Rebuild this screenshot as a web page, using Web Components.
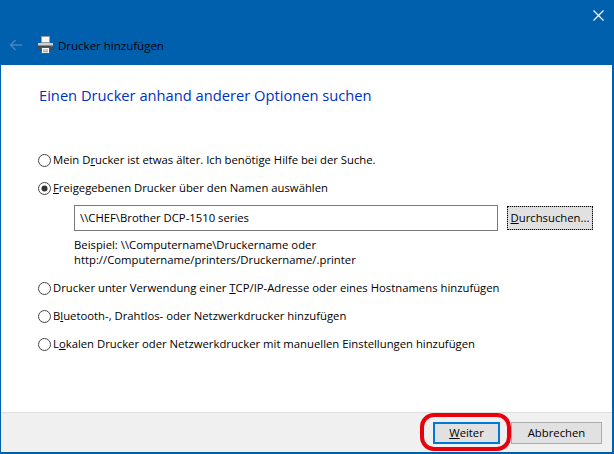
<!DOCTYPE html>
<html lang="de">
<head>
<meta charset="utf-8">
<title>Drucker hinzufügen</title>
<style>
html, body { margin: 0; padding: 0; }
body { font-family: "Open Sans", "Noto Sans", sans-serif; font-size: 11.3px; color: #000; }
u { text-decoration: underline; text-underline-offset: 1px; }
</style>
</head>
<body>
<wizard-window>
    <wizard-header slot="header" title="Drucker hinzufügen"></wizard-header>
    <wizard-title>Einen Drucker anhand anderer Optionen suchen</wizard-title>
    <radio-option style="margin-top:46px"><span>Mein D<u>r</u>ucker ist etwas älter. Ich benötige Hilfe bei der Suche.</span></radio-option>
    <radio-option checked style="margin-top:12px"><span><u>F</u>reigegebenen Drucker über den Namen auswählen</span></radio-option>
    <path-field value="\\CHEF\Brother DCP-1510 series"></path-field>
    <hint-text>Beispiel: \\Computername\Druckername oder<br>http://Computername/printers/Druckername/.printer</hint-text>
    <radio-option style="margin-top:13px"><span>Drucker unter Verwendung einer <u>T</u>CP/IP-Adresse oder eines Hostnamens hinzufügen</span></radio-option>
    <radio-option style="margin-top:12px"><span>B<u>l</u>uetooth-, Drahtlos- oder Netzwerkdrucker hinzufügen</span></radio-option>
    <radio-option style="margin-top:12px"><span>L<u>o</u>kalen Drucker oder Netzwerkdrucker mit manuellen Einstellungen hinzufügen</span></radio-option>
    <wizard-footer slot="footer"></wizard-footer>
</wizard-window>

<script>
// window frame: header on top, page in the middle, footer at the bottom
class WizardWindow extends HTMLElement {
    constructor() {
        super();
        this.attachShadow({ mode: 'open' });
        this.shadowRoot.innerHTML = `
        <style>
            :host {
                display: flex;
                flex-direction: column;
                box-sizing: border-box;
                width: 614px;
                height: 454px;
                background: #fff;
                border-left: 1px solid #0060ae;
                border-right: 2px solid #0060ae;
                border-bottom: 2px solid #0060ae;
            }
            .page {
                flex: 1;
                display: flex;
                flex-direction: column;
                padding: 0 0 0 37px;
                min-height: 0;
            }
        </style>
        <slot name="header"></slot>
        <div class="page"><slot></slot></div>
        <slot name="footer"></slot>
        `;
    }
}
customElements.define('wizard-window', WizardWindow);

class WizardHeader extends HTMLElement {
    constructor() {
        super();
        this.attachShadow({ mode: 'open' });
    }

    connectedCallback() {
        this.shadowRoot.innerHTML = `
        <style>
            :host {
                display: flex;
                flex-direction: column;
                height: 65px;
                margin: 0 -2px 0 -1px;
                background: #0060ae;
            }
            .close {
                display: flex;
                justify-content: flex-end;
                padding: 10px 10px 0 0;
                height: 11px;
            }
            .row {
                display: flex;
                align-items: center;
                margin-top: 14px;
                height: 20px;
                padding-left: 9px;
            }
            .back { margin-right: 15px; }
            .print { margin-right: 4px; }
            .title { font-size: 11.5px; color: #000; white-space: nowrap; }
        </style>
        <div class="close">
            <svg width="11" height="11" viewBox="0 0 11 11"><path d="M.5.5l10 10M10.5.5l-10 10" stroke="#fff" stroke-width="1.2" fill="none"/></svg>
        </div>
        <div class="row">
            <svg class="back" width="13" height="12" viewBox="0 0 13 12"><path d="M13 6H1.5M6.500 1L1.500 6l5 5" stroke="#4a82bd" stroke-width="1.4" fill="none"/></svg>
            <svg class="print" width="17" height="18" viewBox="0 0 17 18">
                <path d="M4.500.500h8v6h-8z" fill="#f6f6f6" stroke="#9a9a9a"/>
                <path d="M.5 7h16v7H.5z" fill="#44494f"/>
                <path d="M1 7h15v2.500H1z" fill="#ced1d4"/>
                <path d="M4.500 11.500h8v6h-8z" fill="#fff" stroke="#555"/>
                <path d="M6 14h5M6 15.800h5" stroke="#777" stroke-width=".8"/>
                <path d="M13.500 9.500h2v1h-2z" fill="#3fa9f5"/>
            </svg>
            <span class="title">${this.getAttribute('title') || ''}</span>
        </div>
        `;
    }
}
customElements.define('wizard-header', WizardHeader);

class WizardTitle extends HTMLElement {
    constructor() {
        super();
        this.attachShadow({ mode: 'open' });
        this.shadowRoot.innerHTML = `
        <style>
            :host {
                display: block;
                margin: 19px 0 0 1px;
                font-size: 14.700px;
                line-height: 22px;
                height: 22px;
                color: #0033bc;
                white-space: nowrap;
            }
        </style>
        <slot></slot>
        `;
    }
}
customElements.define('wizard-title', WizardTitle);

class RadioOption extends HTMLElement {
    constructor() {
        super();
        this.attachShadow({ mode: 'open' });
    }

    connectedCallback() {
        const dot = this.hasAttribute('checked') ? '<circle cx="6.500" cy="6.500" r="3" fill="#333"/>' : '';
        this.shadowRoot.innerHTML = `
        <style>
            :host {
                display: flex;
                align-items: center;
                gap: 2px;
                height: 16px;
                line-height: 16px;
                white-space: nowrap;
            }
            svg { flex: none; }
        </style>
        <svg width="13" height="13" viewBox="0 0 13 13"><circle cx="6.500" cy="6.500" r="6" fill="#fff" stroke="#444"/>${dot}</svg>
        <slot></slot>
        `;
    }
}
customElements.define('radio-option', RadioOption);

// text box and the "Durchsuchen..." button beside it
class PathField extends HTMLElement {
    constructor() {
        super();
        this.attachShadow({ mode: 'open' });
    }

    connectedCallback() {
        this.shadowRoot.innerHTML = `
        <style>
            :host {
                display: flex;
                align-items: center;
                gap: 9px;
                margin: 9px 0 0 36px;
            }
            .box {
                box-sizing: border-box;
                width: 424px;
                height: 26px;
                border: 1px solid #7a7a7a;
                padding-left: 5px;
                line-height: 24px;
                white-space: nowrap;
            }
            .btn {
                box-sizing: border-box;
                width: 86px;
                height: 24px;
                background: #e1e1e1;
                border: 1px solid #adadad;
                outline: 1px dotted #000;
                outline-offset: -1px;
                text-align: center;
                line-height: 22px;
            }
            u { text-underline-offset: 1px; }
        </style>
        <div class="box">${this.getAttribute('value') || ''}</div>
        <div class="btn"><u>D</u>urchsuchen...</div>
        `;
    }
}
customElements.define('path-field', PathField);

class HintText extends HTMLElement {
    constructor() {
        super();
        this.attachShadow({ mode: 'open' });
        this.shadowRoot.innerHTML = `
        <style>
            :host {
                display: block;
                margin: 6px 0 0 36px;
                line-height: 15px;
                white-space: nowrap;
            }
        </style>
        <slot></slot>
        `;
    }
}
customElements.define('hint-text', HintText);

class WizardFooter extends HTMLElement {
    constructor() {
        super();
        this.attachShadow({ mode: 'open' });
        this.shadowRoot.innerHTML = `
        <style>
            :host {
                display: flex;
                justify-content: flex-end;
                align-items: flex-start;
                gap: 11px;
                position: relative;
                height: 40px;
                box-sizing: border-box;
                padding: 9px 10px 0 0;
                background: #f0f0f0;
                border-top: 1px solid #dfdfdf;
            }
            .btn {
                box-sizing: border-box;
                height: 22px;
                line-height: 20px;
                text-align: center;
                background: #e1e1e1;
                border: 1px solid #adadad;
            }
            .btn.default { width: 67px; border: 2px solid #0078d7; line-height: 18px; }
            .btn.cancel { width: 91px; }
            u { text-underline-offset: 1px; }
            /* red marker drawn over the screenshot */
            .marker {
                position: absolute;
                left: 419px;
                top: 0;
                width: 91px;
                height: 38px;
                box-sizing: border-box;
                border: 4px solid #e8000d;
                border-radius: 14px;
            }
        </style>
        <div class="btn default"><u>W</u>eiter</div>
        <div class="btn cancel">Abbrechen</div>
        <div class="marker"></div>
        `;
    }
}
customElements.define('wizard-footer', WizardFooter);
</script>
</body>
</html>
